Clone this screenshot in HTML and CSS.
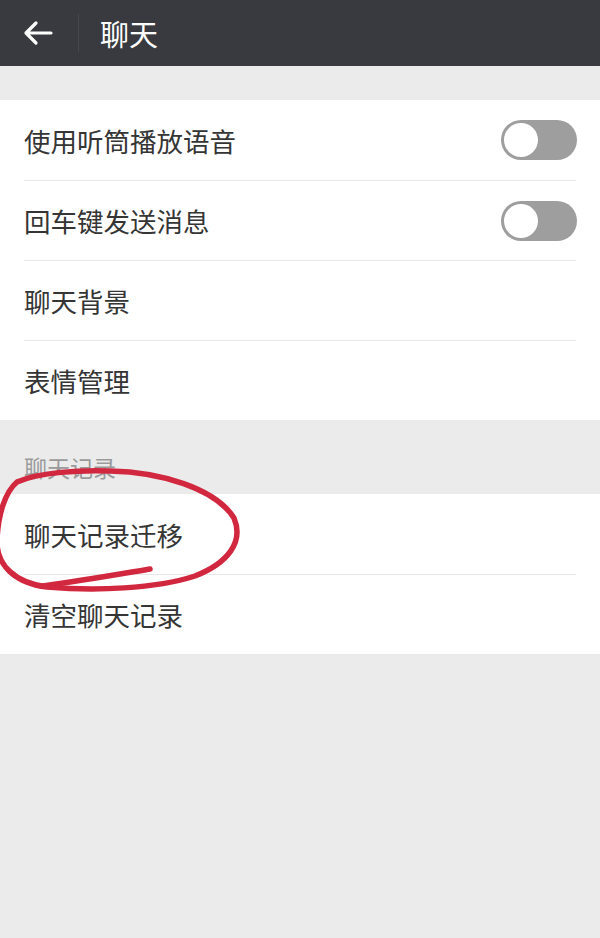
FILE: index.html
```html
<!DOCTYPE html>
<html lang="zh-CN">

<head>
    <meta charset="UTF-8">
    <meta name="viewport" content="width=device-width, initial-scale=1.0">
    <title>聊天</title>
    <link rel="stylesheet" href="styles.css">
</head>

<body>
    <header class="topbar">
        <span class="back">
            <svg width="30" height="26" viewBox="0 0 30 26">
                <path d="M28 13H4M13 3L3 13l10 10" fill="none" stroke="#fff" stroke-width="3.2"
                    stroke-linecap="round" stroke-linejoin="round" />
            </svg>
        </span>
        <span class="divider"></span>
        <h1 class="title">聊天</h1>
    </header>

    <section class="list first">
        <div class="row">
            <span>使用听筒播放语音</span>
            <span class="switch"><span class="knob"></span></span>
        </div>
        <div class="row">
            <span>回车键发送消息</span>
            <span class="switch"><span class="knob"></span></span>
        </div>
        <div class="row"><span>聊天背景</span></div>
        <div class="row"><span>表情管理</span></div>
    </section>

    <div class="section-title">聊天记录</div>

    <section class="list">
        <div class="row"><span>聊天记录迁移</span></div>
        <div class="row"><span>清空聊天记录</span></div>
    </section>

    <!-- hand drawn circle over the screenshot -->
    <svg class="scribble" width="600" height="938" viewBox="0 0 600 938">
        <path d="M17 482 C 40 472, 80 470, 110 471 C 160 472, 215 488, 234 518 C 244 542, 228 563, 195 576
                 C 155 589, 95 591, 47 587 C 15 583, -4 565, -3 540 C -2 515, 5 492, 17 482"
            fill="none" stroke="#d2283f" stroke-width="5.5" stroke-linecap="round" />
        <path d="M150 569 C 120 574, 80 581, 43 586" fill="none" stroke="#d2283f" stroke-width="5.5"
            stroke-linecap="round" />
    </svg>
</body>

</html>
```

FILE: styles.css
```css
body {
    margin: 0;
    font-family: "Noto Sans CJK SC", "Noto Sans", sans-serif;
    background-color: #ebebeb;
    color: #353535;
    position: relative;
    min-height: 938px;
    overflow: hidden;
}

.topbar {
    display: flex;
    align-items: center;
    height: 66px;
    background-color: #393a3f;
}

.back {
    display: flex;
    width: 80px;
    justify-content: center;
    margin-left: -2px;
}

.divider {
    width: 1px;
    height: 38px;
    background-color: #47484d;
}

.title {
    margin: 0 0 0 21px;
    font-size: 29px;
    font-weight: normal;
    color: #fff;
}

.list {
    background-color: #fff;
    padding: 0 24px;
}

.list.first {
    margin-top: 34px;
}

.row {
    display: flex;
    align-items: center;
    justify-content: space-between;
    height: 80px;
    font-size: 26.5px;
    border-top: 1px solid #e8e8e8;
    box-sizing: border-box;
}

.row:first-child {
    border-top: none;
}

.switch {
    display: flex;
    align-items: center;
    width: 76px;
    height: 40px;
    border-radius: 20px;
    background-color: #9e9e9e;
    margin-right: -1px;
}

.knob {
    width: 34px;
    height: 34px;
    margin-left: 3px;
    border-radius: 50%;
    background-color: #fff;
}

.section-title {
    height: 74px;
    padding: 30px 24px 0;
    box-sizing: border-box;
    font-size: 23px;
    color: #9a9a9a;
}

.scribble {
    position: absolute;
    top: 0;
    left: 0;
    pointer-events: none;
}
```
